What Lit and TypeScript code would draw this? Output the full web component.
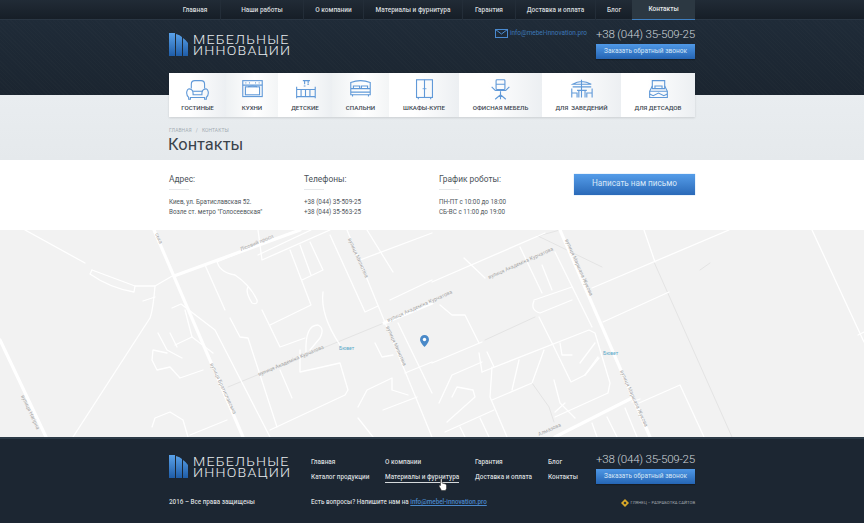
import { LitElement, html, css, svg } from 'lit';
import { customElement } from 'lit/decorators.js';

const topLinks = ['Главная', 'Наши работы', 'О компании', 'Материалы и фурнитура', 'Гарантия', 'Доставка и оплата', 'Блог', 'Контакты'];

const icons = {
  sofa: svg`<path d="M6 11V6q0-4 4-4h7q4 0 4 4v5"/><path d="M6 12q-4-2-5 2t2 7v2h2v-2h16v2h2v-2q3-3 2-7t-5-2q-2 1-2 4v2H8v-2q0-3-2-4z"/><path d="M8 14h11"/>`,
  kitchen: svg`<rect x="2" y="2" width="22" height="18"/><path d="M2 7h22M5 4.500h1M9 4.500h1M16 4.500h1M20 4.500h1"/><rect x="5" y="9" width="16" height="9"/><path d="M8 9q5-2 10 0"/>`,
  kids: svg`<path d="M3 9v13M24 9v13M3 12h21M3 20h21M8 12v8M13 12v8M18 12v8"/><path d="M10 2h8M12 2v4M16 2v3M11 8h2M15 6h2"/>`,
  bed: svg`<path d="M2 4q11-4 22 0v14H2zM2 11h22M2 15h22"/><path d="M5 11V8h7v3M14 11V8h7v3M4 18v2M22 18v2"/>`,
  wardrobe: svg`<rect x="4" y="1" width="18" height="20"/><path d="M13 1v20M11 11h1M14 11h1M6 21v2M20 21v2"/>`,
  chair: svg`<rect x="8" y="1" width="10" height="11" rx="1"/><path d="M8 6h10M7 13h12M3 9l4 4M23 9l-4 4M13 14v4M7 23l6-5 6 5M13 18v5"/>`,
  cafe: svg`<path d="M3 6q10-6 21 0zM13 1v20M3 9h21M2 11v10M25 11v10M2 16h6v5M25 16h-6v5M8 13h11M10 13v8M17 13v8"/>`,
  nursery: svg`<path d="M6 2h14v9H6zM9 8h8v3H9z"/><path d="M6 8l-3 6v7h20v-7l-3-6"/><path d="M3 14h20M3 17l4 2 6-3 6 3 4-2"/>`,
};

const cats: [string, keyof typeof icons][] = [
  ['ГОСТИНЫЕ', 'sofa'], ['КУХНИ', 'kitchen'], ['ДЕТСКИЕ', 'kids'], ['СПАЛЬНИ', 'bed'],
  ['ШКАФЫ-КУПЕ', 'wardrobe'], ['ОФИСНАЯ МЕБЕЛЬ', 'chair'], ['ДЛЯ  ЗАВЕДЕНИЙ', 'cafe'], ['ДЛЯ ДЕТСАДОВ', 'nursery'],
];

// map roads, in px from the map's top left
const wide = ['M154 0L243 207', 'M174 46L300 0', 'M0 110L46 207', 'M560 0L650 207', 'M555 207L632 168', 'M384 93L432 73'];
const mid = [
  'M25 0L85 33', 'M92 40L135 56H155L174 45', 'M92 40L90 44Q110 58 134 62L135 56', 'M155 56Q153 80 150 88L73 207',
  'M143 71L155 67', 'M172 78L181 74L215 100L270 207', 'M205 35L225 80', 'M230 88L240 107L248 108L277 197',
  'M217 30Q218 42 235 45Q250 55 257 70Q258 75 252 73Q245 62 248 57', 'M217 32L248 19', 'M258 25L311 0',
  'M290 20L311 75L270 95', 'M300 15L311 45', 'M310 12L323 40L302 50', 'M258 0L262 30L330 0',
  'M262 80L280 117L305 108', 'M306 122Q305 95 318 95Q325 98 320 108L310 120', 'M323 62Q320 85 340 115',
  'M347 0L432 207', 'M330 5L365 82L378 76', 'M360 30L432 3', 'M367 0L393 42', 'M390 70L432 50', 'M398 93L432 163',
  'M375 113L382 127L393 125', 'M300 120L300 142L340 133L348 160L345 165L270 200',
  'M280 140L292 168', 'M358 177L367 160L392 148L392 160L408 165', 'M358 188L373 207', 'M383 180L417 167', 'M405 143L432 132',
  'M152 197L155 188L170 182L183 190L188 207', 'M190 205L227 190', 'M158 103L167 120L182 128', 'M170 103L177 117', 'M175 115L192 107',
  'M167 123L153 120L152 130L157 140L170 137L180 148L203 140', 'M185 80L192 107L213 123',
  'M432 52L545 3', 'M464 28L485 48', 'M520 17L542 63', 'M542 35L552 60', 'M555 22L592 97', 'M534 70L572 57',
  'M534 71Q530 80 540 83L572 70', 'M592 58L729 0', 'M603 92L669 62', 'M644 0L655 32', 'M812 0L864 112', 'M858 105L864 102',
  'M440 75L452 85L465 85L479 113', 'M432 133L482 112', 'M539 87L552 113L571 152L585 145L598 127',
  'M482 142L589 100L595 103L610 153L608 163L555 187', 'M479 123L482 142', 'M487 122L494 137', 'M519 130L512 160',
  'M544 120L532 153L492 170', 'M492 137L490 167L507 207', 'M554 150L560 173L575 188', 'M555 182L565 173',
  'M560 113L562 125L572 125', 'M595 113L580 133', 'M599 128L585 145', 'M439 173L452 145L482 132',
  'M447 192L475 167L473 160L457 157L452 167', 'M445 202L494 180', 'M480 188L489 207', 'M460 197L465 207',
  'M639 173L680 155L704 207', 'M592 193L597 207', 'M607 187L617 207', 'M625 178L637 207', 'M632 172L640 169',
];
const grey = ['M228 157L384 93', 'M538 6L602 37', 'M538 6L560 0', 'M654 32L732 207', 'M700 40L710 33', 'M485 110L535 87', 'M532 153L549 177L554 192'];

const labels: [string, number, number, number][] = [
  ['Лісовий просп', 241, 21, -22], ['вулиця Братиславська', 210, 134, 65], ['вулиця Нагірна', 21, 166, 65],
  ['вулиця Академіка Курчатова', 259, 146, -23], ['вулиця Милютіна', 348, 9, 66], ['вулиця Милютіна', 386, 97, 66],
  ['вулиця Академіка Курчатова', 388, 92, -24], ['вулиця Академіка Курчатова', 489, 49, -24],
  ['вулиця Маршала Жукова', 565, 10, 66], ['вулиця Маршала Жукова', 620, 141, 66],
  ['Алмазова', 539, 206, -24], ['ська', 155, 4, 65],
];

@customElement('app-root')
export class AppRoot extends LitElement {
  static styles = css`
    :host { display: block; width: 864px; font-family: Roboto, 'Liberation Sans', sans-serif; overflow: hidden; }
    a { color: inherit; text-decoration: none; }
    .wrap { width: 526px; margin-left: 169px; }

    .top { background: linear-gradient(#212b36, #161e27); height: 20px; border-bottom: 1px solid #2a3643; box-sizing: border-box; }
    .top-nav { display: grid; grid-template-columns: 51px 83px 60px 99px 53px 80px 37px 63px; height: 20px; }
    .top-nav a { display: flex; align-items: center; justify-content: center; font-size: 6.5px; font-weight: 500; color: #d6dadd; border-left: 1px solid #232d38; padding-bottom: 1px; box-sizing: border-box; }
    .top-nav a:first-child { border-left: 0; padding-left: 1px; }
    .top-nav a.active { background: #2c3842; border-left: 0; border-bottom: 1px solid #3f7fc0; color: #e6e9ea; }

    .head {
      height: 75px;
      background:
        repeating-linear-gradient(45deg, rgba(255,255,255,.012) 0 1px, transparent 1px 3px),
        linear-gradient(#1f2b38, #1b2530);
    }
    .head-row { display: flex; justify-content: space-between; padding-top: 8px; }
    .logo { display: flex; gap: 5px; align-items: flex-start; padding-top: 5px; }
    .logo-text { color: #e8ecee; font-size: 13px; line-height: 11px; font-weight: 300; letter-spacing: 1.1px; white-space: nowrap; display: block; margin-top: 1px; transform: scaleX(1.09); transform-origin: 0 0; }
    .head-right { display: flex; gap: 9px; }
    .mail { display: flex; gap: 2px; align-items: center; height: 12px; margin-top: -1px; color: #3d78b8; font-size: 6.45px; }
    .contact { width: 99px; }
    .phone { font-size: 11.6px; font-weight: 300; letter-spacing: -.24px; color: #cdd3d8; line-height: 13px; white-space: nowrap; text-align: right; }
    .btn { display: block; height: 15px; margin-top: 3px; line-height: 14px; text-align: center; font-size: 6.5px; color: #d7e6f6; background: linear-gradient(#4f98e6, #2565b4); box-shadow: 0 1px 1px rgba(0,0,0,.25); }

    .cats { display: grid; grid-template-columns: 57px 52px 54px 57px 70px 83px 79px 74px; height: 44px; margin-top: -22px; box-shadow: 0 1px 2px rgba(0,0,0,.12); position: relative; }
    .cat { display: flex; flex-direction: column; align-items: center; padding-top: 5px; box-sizing: border-box; background: linear-gradient(90deg, #fff 35%, #eceff2); color: #3c4650; font-size: 6.15px; font-weight: 500; line-height: 9px; white-space: pre; }
    .cat svg { width: 23px; height: 23px; fill: none; stroke: #6099d8; stroke-width: 1.25; display: block; margin-bottom: 3px; }
    .cat:nth-child(2), .cat:nth-child(4) { background: linear-gradient(90deg, #eef1f3, #fff 55%, #f3f5f6); }

    .band { height: 65px; background: linear-gradient(#e9edf0, #e5e9ec); }
    .band-in { margin-top: -22px; }
    .crumbs { padding-top: 32px; font-size: 4.9px; letter-spacing: .1px; color: #a4acb3; }
    .crumbs i { font-style: normal; margin: 0 4px; }
    h1 { margin: 2px 0 0 -1px; font-size: 16.4px; font-weight: 400; line-height: 20px; color: #3a434b; }

    .info { background: #fff; height: 70px; }
    .info-row { display: grid; grid-template-columns: 135px 135px 135px 121px; padding-top: 14px; }
    .info h3 { margin: 0; font-size: 8.4px; font-weight: 400; line-height: 10px; color: #4b5259; }
    .info hr { width: 20px; height: 1px; margin: 5px 0 7px; border: 0; background: #e6e8ea; }
    .info p { margin: 0; font-size: 6.3px; line-height: 10px; color: #4e555b; }
    .write { display: block; height: 21px; line-height: 19px; text-align: center; font-size: 8.2px; color: #d8e7f7; background: linear-gradient(#559de9, #2a69b8); box-shadow: 0 0 1px #8ebcec; }

    .map { height: 207px; background: #f2f2f2; position: relative; overflow: hidden; }
    .map svg { display: block; position: absolute; left: 0; top: 0; fill: none; stroke: #fff; stroke-linecap: round; stroke-linejoin: round; }
    .map .w { stroke-width: 3.2; }
    .map .m { stroke-width: 1.3; }
    .map .g { stroke: #e4e4e4; stroke-width: 1; }
    .map text { fill: #a5a5a5; stroke: none; font-size: 5.2px; }
    .map text.poi { fill: #5aa9c8; font-size: 5px; }
    .map .pin { fill: #4a89c8; stroke: none; }
    .map .dot { fill: #fff; stroke: none; }

    .foot { height: 86px; box-sizing: border-box; border-top: 2px solid #2c3a47; background: #1c2632; color: #d5d9dc; }
    .foot-grid { display: grid; grid-template-columns: 142px 74px 90px 73px 48px 99px; padding-top: 14px; position: relative; }
    .foot .logo { padding-top: 2px; }
    .links { display: flex; flex-direction: column; gap: 6px; padding-top: 5px; font-size: 6.45px; font-weight: 500; line-height: 9px; white-space: nowrap; }
    .links .hover { border-bottom: 1px solid #d5d9dc; line-height: 8px; align-self: flex-start; padding-bottom: 1px; }
    .foot-bottom { display: grid; grid-template-columns: 142px 1fr auto; align-items: center; font-size: 6.3px; font-weight: 500; margin-top: 14px; line-height: 9px; }
    .foot-bottom a { color: #4a88cc; text-decoration: underline; }
    .credit { display: flex; align-items: center; gap: 2px; font-size: 4.2px; color: #a4aab0; font-weight: 400; }
    .credit svg { display: block; }
    .cursor { position: absolute; left: 269px; top: 39px; }
  `;

  private logo() {
    return html`<div class="logo">
      <svg width="19" height="23" viewBox="0 0 19 23">
        <defs><linearGradient id="lg" x1="0" x2="0" y1="0" y2="1"><stop offset="0" stop-color="#5aa2ea"/><stop offset="1" stop-color="#1f5da8"/></linearGradient></defs>
        <path fill="url(#lg)" d="M0 0h6v23H0zM7 1q4 1 6 3v19H7zM14 5q3 2 5 5v13h-5z"/>
      </svg>
      <span class="logo-text">МЕБЕЛЬНЫЕ<br />ИННОВАЦИИ</span>
    </div>`;
  }

  private contact() {
    return html`<div class="phone">+38 (044) 35-509-25</div><a class="btn" href="#">Заказать обратный звонок</a>`;
  }

  render() {
    return html`
      <div class="top"><nav class="wrap top-nav">
        ${topLinks.map((t) => html`<a href="#" class=${t === 'Контакты' ? 'active' : ''}>${t}</a>`)}
      </nav></div>
      <header class="head"><div class="wrap head-row">
        ${this.logo()}
        <div class="head-right">
          <div class="mail">
            <svg width="13" height="9" viewBox="0 0 13 9" fill="none" stroke="#4a8ad0"><rect x=".5" y=".5" width="12" height="8"/><path d="M.5 .5l6 4.500 6-4.500"/></svg>
            <a href="#">info@mebel-innovation.pro</a>
          </div>
          <div class="contact">${this.contact()}</div>
        </div>
      </div></header>
      <nav class="wrap cats">
        ${cats.map(([t, i]) => html`<a class="cat" href="#"><svg viewBox="0 0 26 24">${icons[i]}</svg>${t}</a>`)}
      </nav>
      <section class="band"><div class="wrap band-in">
        <div class="crumbs">ГЛАВНАЯ<i>/</i>КОНТАКТЫ</div>
        <h1>Контакты</h1>
      </div></section>
      <section class="info"><div class="wrap info-row">
        <div><h3>Адрес:</h3><hr /><p>Киев, ул. Братиславская 52.<br />Возле ст. метро "Голосеевская"</p></div>
        <div><h3>Телефоны:</h3><hr /><p>+38 (044) 35-509-25<br />+38 (044) 35-563-25</p></div>
        <div><h3>График роботы:</h3><hr /><p>ПН-ПТ с 10:00 до 18:00<br />СБ-ВС с 11:00 до 19:00</p></div>
        <div><a class="write" href="#">Написать нам письмо</a></div>
      </div></section>
      <section class="map">
        <svg width="864" height="207" viewBox="0 0 864 207">
          ${grey.map((d) => svg`<path class="g" d=${d} />`)}
          ${mid.map((d) => svg`<path class="m" d=${d} />`)}
          ${wide.map((d) => svg`<path class="w" d=${d} />`)}
          ${labels.map(([t, x, y, r]) => svg`<text x=${x} y=${y} transform="rotate(${r} ${x} ${y})">${t}</text>`)}
          <text class="poi" x="339" y="120">Бювет</text>
          <text class="poi" x="603" y="125">Бювет</text>
          <path class="pin" d="M424.500 105c-2.500 0-4.500 2-4.500 4.500 0 3 4.500 7.500 4.500 7.500s4.500-4.500 4.500-7.500c0-2.500-2-4.500-4.500-4.500z" />
          <circle class="dot" cx="424.500" cy="109.500" r="1.700" />
        </svg>
      </section>
      <footer class="foot"><div class="wrap">
        <div class="foot-grid">
          ${this.logo()}
          <div class="links"><a href="#">Главная</a><a href="#">Каталог продукции</a></div>
          <div class="links"><a href="#">О компании</a><a class="hover" href="#">Материалы и фурнитура</a></div>
          <div class="links"><a href="#">Гарантия</a><a href="#">Доставка и оплата</a></div>
          <div class="links"><a href="#">Блог</a><a href="#">Контакты</a></div>
          <div>${this.contact()}</div>
          <svg class="cursor" width="9" height="13" viewBox="0 0 9 13"><path fill="#fff" stroke="#222" stroke-width=".5" d="M2.500 1q1-1 1.500 0v4l3.500 1q1 .5 1 1.500v3L7.500 12.500h-4L1 8q0-1 1.500-.5z"/></svg>
        </div>
        <div class="foot-bottom">
          <div>2016 – Все права защищены</div>
          <div>Есть вопросы? Напишите нам на <a href="#">info@mebel-innovation.pro</a></div>
          <div class="credit">
            <svg width="8" height="8" viewBox="0 0 8 8"><path fill="#d9a928" d="M4 0l4 4-4 4-4-4z"/><path fill="#1c2632" d="M4 2.500l1.500 1.500-1.500 1.500-1.500-1.500z"/></svg>
            ГЛЯНЕЦ – РАЗРАБОТКА САЙТОВ
          </div>
        </div>
      </div></footer>
    `;
  }
}
